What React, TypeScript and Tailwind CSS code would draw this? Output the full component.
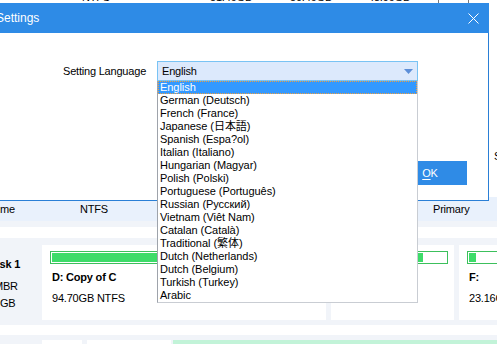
import type { ReactNode } from 'react';

const languages = [
  'English',
  'German (Deutsch)',
  'French (France)',
  'Japanese (日本語)',
  'Spanish (Espa?ol)',
  'Italian (Italiano)',
  'Hungarian (Magyar)',
  'Polish (Polski)',
  'Portuguese (Português)',
  'Russian (Русский)',
  'Vietnam (Viêt Nam)',
  'Catalan (Català)',
  'Traditional (繁体)',
  'Dutch (Netherlands)',
  'Dutch (Belgium)',
  'Turkish (Turkey)',
  'Arabic',
];

function UsageBar({ fill }: { fill: number }) {
  return (
    <div className="h-[13px] border border-[#3cc05c] bg-white p-px">
      <div className="h-full bg-[#3ddc69]" style={{ width: `${fill}%` }} />
    </div>
  );
}

function PartCard({ w, fill, name, info }: { w: string; fill: number; name: string; info: ReactNode }) {
  return (
    <div className={`${w} h-[75px] shrink-0 bg-white pl-[8px] pr-[6px] pt-[6px] leading-[13px]`}>
      <UsageBar fill={fill} />
      <div className="mt-[7px] pl-[2px] font-bold whitespace-nowrap">{name}</div>
      <div className="mt-[8px] pl-[2px] whitespace-nowrap">{info}</div>
    </div>
  );
}

export default function App() {
  return (
    <div className="relative w-[497px] h-[344px] overflow-hidden bg-white text-[11px] text-black tracking-[-0.2px] font-['Liberation_Sans','Noto_Sans_CJK_JP',sans-serif]">
      {/* partition table, mostly behind the dialog */}
      <div className="h-[3px] overflow-hidden">
        <div className="flex -mt-[9px] leading-[13px] whitespace-nowrap">
          <span className="w-[82px] shrink-0" />
          <span className="w-[128px] shrink-0">NTFS</span>
          <span className="w-[80px] shrink-0">51.46GB</span>
          <span className="w-[78px] shrink-0">50.46GB</span>
          <span className="w-[70px] shrink-0">48.96GB</span>
          <span className="w-[31px] h-[13px] shrink-0 border border-[#7a7a7a]" />
        </div>
      </div>
      <div className="h-[194px] pt-[147px] pl-[494px] leading-[13px] whitespace-nowrap">S</div>
      <div className="h-[24px] bg-[#e9f1fc] flex items-center whitespace-nowrap">
        <span className="w-[80px] shrink-0">me</span>
        <span className="w-[353px] shrink-0">NTFS</span>
        <span>Primary</span>
      </div>
      <div className="h-[6px] bg-[#f1f4f9]" />
      <div className="h-[11px]" />

      {/* disk map */}
      <div className="h-[87px] bg-[#f1f4f9] pt-[7px] flex">
        <div className="w-[42px] shrink-0 pt-[13px] leading-[13px] whitespace-nowrap">
          <div className="-ml-[11px] font-bold">Disk 1</div>
          <div className="-ml-[6px] mt-[9px]">MBR</div>
          <div className="mt-[4px]">GB</div>
        </div>
        <PartCard w="w-[284px]" fill={100} name="D: Copy of C" info="94.70GB NTFS" />
        <div className="w-[5px] shrink-0" />
        <PartCard w="w-[123px]" fill={78} name="E:" info="51.46GB NTFS" />
        <div className="w-[5px] shrink-0" />
        <PartCard w="w-[120px]" fill={7} name="F:" info="23.16GB NTFS" />
      </div>
      <div className="h-[10px]" />
      <div className="h-[9px] bg-[#f1f4f9] pt-[5px] flex">
        <div className="w-[42px] shrink-0" />
        <div className="w-[40px] shrink-0 bg-white" />
        <div className="w-[5px] shrink-0" />
        <div className="w-[84px] shrink-0 bg-white" />
        <div className="w-[2px] shrink-0" />
        <div className="flex-1 bg-[#c2f3d8]" />
      </div>

      {/* settings dialog */}
      <div className="absolute left-[-40px] top-[3px] w-[529px]">
        <div className="h-[30px] bg-[#2e8be6] flex items-center justify-between pl-[36px] pr-[10px] text-white text-[12px] tracking-normal">
          <span>Settings</span>
          <svg width="11" height="11" viewBox="0 0 11 11" fill="none">
            <path d="M0.5 0.5L10.5 10.5M10.5 0.5L0.5 10.5" stroke="white" strokeWidth="1" />
          </svg>
        </div>
        <div className="h-[168px] bg-white border-x border-b border-[#2a7fd6] flex flex-col">
          <div className="mt-[28px] pl-[102px] flex items-center">
            <span className="w-[94px] shrink-0">Setting Language</span>
            <div className="w-[261px] h-[20px] bg-[#dce9fc] border border-[#79c3f4] flex items-center justify-between pl-[4px] pr-[4px]">
              <span>English</span>
              <svg width="9" height="5" viewBox="0 0 9 5">
                <path d="M0 0H9L4.5 5Z" fill="#5c8ed8" />
              </svg>
            </div>
          </div>
          <div className="mt-[80px] pr-[21px] flex justify-end">
            <button className="w-[74px] h-[24px] bg-[#2f8be6] text-white flex items-center justify-center">
              <span>
                <span className="underline underline-offset-2">O</span>K
              </span>
            </button>
          </div>
        </div>
      </div>

      {/* open language list */}
      <div className="absolute left-[157px] top-[81px] w-[261px] h-[222px] bg-white border-l border-r border-b border-l-[#9ea3ab] border-r-[#c9cdd3] border-b-[#c9cdd3] tracking-[-0.05px]">
        {languages.map((lang, i) =>
          i === 0 ? (
            <div
              key={lang}
              className="h-[13px] leading-[11px] pl-[1px] bg-[#3399ff] text-white border border-dotted border-[#f0a040] whitespace-nowrap"
            >
              {lang}
            </div>
          ) : (
            <div key={lang} className="h-[13px] leading-[13px] pl-[2px] whitespace-nowrap">
              {lang}
            </div>
          )
        )}
      </div>
    </div>
  );
}
